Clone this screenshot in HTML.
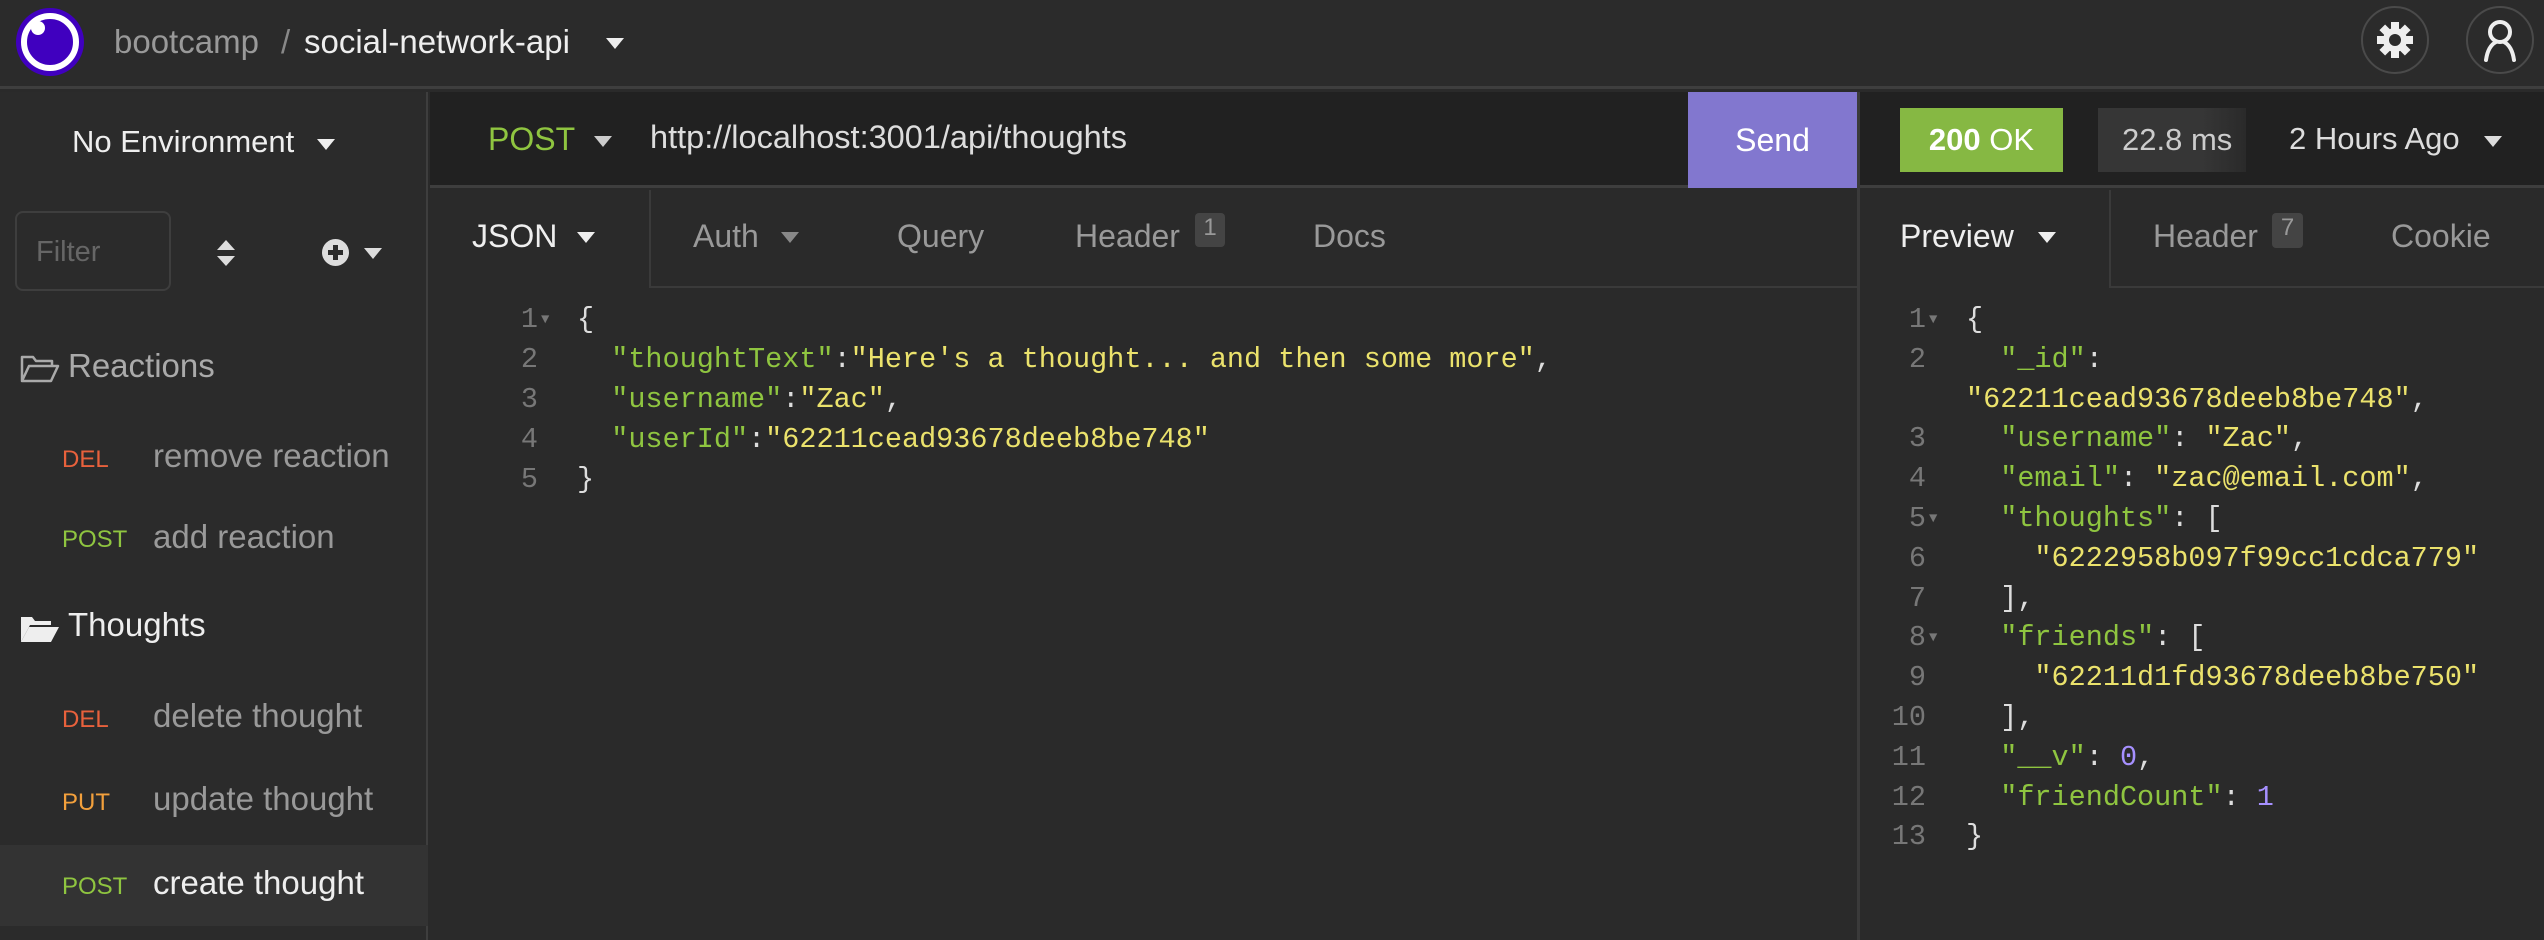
<!DOCTYPE html>
<html><head><meta charset="utf-8"><style>
*{margin:0;padding:0;box-sizing:border-box}
body{width:2544px;height:940px;background:#2a2a2a;font-family:"Liberation Sans",sans-serif;color:#ddd;position:relative;overflow:hidden}
.a{position:absolute;white-space:nowrap}
.tri{position:absolute;width:0;height:0;border-left:9px solid transparent;border-right:9px solid transparent;border-top:11px solid #ddd}
.mono{font-family:"Liberation Mono",monospace;font-size:28.5px}
.mono span,.mono .p{white-space:pre}
.row{display:flex;height:40px}
.ln{color:#777;text-align:right;width:60px}
.fa{width:40px;color:#777;font-size:14px;padding-left:3px}
.k{color:#8fc540}.s{color:#ebe26c}.n{color:#a690ff}.p{color:#ddd}
</style></head><body>
<!-- top bar -->
<div class="a" style="left:0;top:0;width:2544px;height:89px;background:#2b2b2b;border-bottom:3px solid #3e3e3e"></div>
<svg class="a" style="left:14px;top:6px" width="72" height="72"><circle cx="36" cy="36" r="34" fill="#4000bf"/><circle cx="36" cy="36" r="26" fill="none" stroke="#fff" stroke-width="6"/><circle cx="24" cy="22" r="7" fill="#fff"/></svg>
<div class="a" style="left:114px;top:23px;font-size:33px;color:#999">bootcamp</div>
<div class="a" style="left:281px;top:23px;font-size:33px;color:#888">/</div>
<div class="a" style="left:304px;top:23px;font-size:33px;color:#eee">social-network-api</div>
<div class="tri" style="left:606px;top:38px;border-top-color:#eee"></div>
<div class="a" style="left:2361px;top:6px;width:68px;height:68px;border:2px solid #4a4a4a;border-radius:50%"></div>
<svg class="a" style="left:2375px;top:20px" width="40" height="40" viewBox="0 0 40 40"><g fill="#eee"><circle cx="20" cy="20" r="12"/><rect x="16" y="2" width="8" height="36"/><rect x="2" y="16" width="36" height="8"/><rect x="16" y="2" width="8" height="36" transform="rotate(45 20 20)"/><rect x="16" y="2" width="8" height="36" transform="rotate(-45 20 20)"/></g><circle cx="20" cy="20" r="6" fill="#2b2b2b"/></svg>
<div class="a" style="left:2466px;top:6px;width:68px;height:68px;border:2px solid #4a4a4a;border-radius:50%"></div>
<svg class="a" style="left:2480px;top:18px" width="40" height="44" viewBox="0 0 40 44"><circle cx="20" cy="14" r="10" fill="none" stroke="#eee" stroke-width="4"/><path d="M6 42 Q8 28 16 24 M34 42 Q32 28 24 24" fill="none" stroke="#eee" stroke-width="4" stroke-linecap="round"/></svg>

<!-- sidebar -->
<div class="a" style="left:0;top:92px;width:428px;height:848px;background:#2b2b2b;border-right:2px solid #3e3e3e"></div>
<div class="a" style="left:72px;top:124px;font-size:31px;color:#eee">No Environment</div>
<div class="tri" style="left:317px;top:139px;border-top-color:#eee"></div>
<div class="a" style="left:15px;top:211px;width:156px;height:80px;border:2px solid #3e3e3e;border-radius:8px"></div>
<div class="a" style="left:36px;top:236px;font-size:29px;color:#666">Filter</div>
<div class="a" style="left:217px;top:240px;width:0;height:0;border-left:9px solid transparent;border-right:9px solid transparent;border-bottom:10px solid #ddd"></div>
<div class="a" style="left:217px;top:256px;width:0;height:0;border-left:9px solid transparent;border-right:9px solid transparent;border-top:10px solid #ddd"></div>
<div class="a" style="left:322px;top:239px;width:27px;height:27px;border-radius:50%;background:#ddd"></div>
<div class="a" style="left:333px;top:245px;width:5px;height:15px;background:#2b2b2b"></div>
<div class="a" style="left:328px;top:250px;width:15px;height:5px;background:#2b2b2b"></div>
<div class="tri" style="left:364px;top:248px;border-top-color:#ddd"></div>
<svg class="a" style="left:20px;top:354px" width="40" height="30" viewBox="0 0 40 30"><path d="M2 27 V3 H13 L16 7 H32 V12 M2 27 L9 12 H38 L31 27 Z" fill="none" stroke="#aaa" stroke-width="2.5" stroke-linejoin="round"/></svg>
<div class="a" style="left:68px;top:347px;font-size:33px;color:#aaa">Reactions</div>
<div class="a" style="left:62px;top:446px;font-size:24px;color:#e8613c">DEL</div>
<div class="a" style="left:153px;top:437px;font-size:33px;color:#999">remove reaction</div>
<div class="a" style="left:62px;top:526px;font-size:24px;color:#8fc540">POST</div>
<div class="a" style="left:153px;top:518px;font-size:33px;color:#999">add reaction</div>
<svg class="a" style="left:20px;top:614px" width="40" height="30" viewBox="0 0 40 30"><path d="M1 28 V3 H12 L15 7 H31 V11 H10 Z" fill="#eee"/><path d="M1 28 L9 13 H39 L31 28 Z" fill="#eee"/></svg>
<div class="a" style="left:68px;top:606px;font-size:33px;color:#eee">Thoughts</div>
<div class="a" style="left:62px;top:706px;font-size:24px;color:#e8613c">DEL</div>
<div class="a" style="left:153px;top:697px;font-size:33px;color:#999">delete thought</div>
<div class="a" style="left:62px;top:789px;font-size:24px;color:#f3a03c">PUT</div>
<div class="a" style="left:153px;top:780px;font-size:33px;color:#999">update thought</div>
<div class="a" style="left:0;top:845px;width:428px;height:81px;background:#333"></div>
<div class="a" style="left:62px;top:873px;font-size:24px;color:#8fc540">POST</div>
<div class="a" style="left:153px;top:864px;font-size:33px;color:#eee">create thought</div>

<!-- url bar -->
<div class="a" style="left:430px;top:92px;width:2114px;height:96px;background:#212121;border-bottom:3px solid #3e3e3e"></div>
<div class="a" style="left:488px;top:121px;font-size:32px;color:#8fc540">POST</div>
<div class="tri" style="left:594px;top:136px;border-top-color:#ccc"></div>
<div class="a" style="left:650px;top:119px;font-size:32.5px;color:#ddd">http://localhost:3001/api/thoughts</div>
<div class="a" style="left:1688px;top:92px;width:169px;height:96px;background:#8277cf;color:#fff;font-size:32px;text-align:center;line-height:96px">Send</div>
<div class="a" style="left:1857px;top:92px;width:3px;height:848px;background:#3a3a3a"></div>
<div class="a" style="left:1900px;top:108px;width:163px;height:64px;background:#86b843;color:#fff;font-size:31px;text-align:center;line-height:64px"><b>200</b> OK</div>
<div class="a" style="left:2098px;top:108px;width:148px;height:64px;background:linear-gradient(90deg,#363636 70%,#2a2a2a);color:#ccc;font-size:31px;line-height:64px;padding-left:24px;overflow:hidden">22.8 ms</div>
<div class="a" style="left:2289px;top:121px;font-size:31px;color:#ddd">2 Hours Ago</div>
<div class="tri" style="left:2484px;top:136px;border-top-color:#ddd"></div>

<!-- tabs -->
<div class="a" style="left:649px;top:190px;width:1208px;height:98px;border-left:2px solid #3a3a3a;border-bottom:2px solid #3a3a3a"></div>
<div class="a" style="left:472px;top:218px;font-size:32px;color:#eee">JSON</div>
<div class="tri" style="left:577px;top:232px;border-top-color:#eee"></div>
<div class="a" style="left:693px;top:218px;font-size:32px;color:#999">Auth</div>
<div class="tri" style="left:781px;top:232px;border-top-color:#888"></div>
<div class="a" style="left:897px;top:218px;font-size:32px;color:#999">Query</div>
<div class="a" style="left:1075px;top:218px;font-size:32px;color:#999">Header</div>
<div class="a" style="left:1195px;top:213px;width:30px;height:34px;background:#444;border-radius:4px;color:#999;font-size:24px;text-align:center;line-height:30px">1</div>
<div class="a" style="left:1313px;top:218px;font-size:32px;color:#999">Docs</div>

<div class="a" style="left:2109px;top:190px;width:435px;height:98px;border-left:2px solid #3a3a3a;border-bottom:2px solid #3a3a3a"></div>
<div class="a" style="left:1900px;top:218px;font-size:32px;color:#eee">Preview</div>
<div class="tri" style="left:2038px;top:232px;border-top-color:#eee"></div>
<div class="a" style="left:2153px;top:218px;font-size:32px;color:#999">Header</div>
<div class="a" style="left:2272px;top:213px;width:31px;height:35px;background:#444;border-radius:4px;color:#999;font-size:24px;text-align:center;line-height:30px">7</div>
<div class="a" style="left:2391px;top:218px;font-size:32px;color:#999">Cookie</div>

<!-- left code -->
<div class="a mono" style="left:478px;top:300px;line-height:40px">
<div class="row"><div class="ln">1</div><div class="fa" style="width:39px">▼</div><div class="p">{</div></div>
<div class="row"><div class="ln">2</div><div style="width:39px"></div><div><span class="p">  </span><span class="k">"thoughtText"</span><span class="p">:</span><span class="s">"Here's a thought... and then some more"</span><span class="p">,</span></div></div>
<div class="row"><div class="ln">3</div><div style="width:39px"></div><div><span class="p">  </span><span class="k">"username"</span><span class="p">:</span><span class="s">"Zac"</span><span class="p">,</span></div></div>
<div class="row"><div class="ln">4</div><div style="width:39px"></div><div><span class="p">  </span><span class="k">"userId"</span><span class="p">:</span><span class="s">"62211cead93678deeb8be748"</span></div></div>
<div class="row"><div class="ln">5</div><div style="width:39px"></div><div class="p">}</div></div>
</div>

<!-- right code -->
<div class="a mono" style="left:1866px;top:300px;line-height:40px">
<div class="row" style="height:39.8px"><div class="ln">1</div><div class="fa">▼</div><div class="p">{</div></div>
<div class="row" style="height:39.8px"><div class="ln">2</div><div style="width:40px"></div><div><span class="p">  </span><span class="k">"_id"</span><span class="p">:</span></div></div>
<div class="row" style="height:39.8px"><div class="ln"></div><div style="width:40px"></div><div><span class="s">"62211cead93678deeb8be748"</span><span class="p">,</span></div></div>
<div class="row" style="height:39.8px"><div class="ln">3</div><div style="width:40px"></div><div><span class="p">  </span><span class="k">"username"</span><span class="p">: </span><span class="s">"Zac"</span><span class="p">,</span></div></div>
<div class="row" style="height:39.8px"><div class="ln">4</div><div style="width:40px"></div><div><span class="p">  </span><span class="k">"email"</span><span class="p">: </span><span class="s">"zac@email.com"</span><span class="p">,</span></div></div>
<div class="row" style="height:39.8px"><div class="ln">5</div><div class="fa">▼</div><div><span class="p">  </span><span class="k">"thoughts"</span><span class="p">: [</span></div></div>
<div class="row" style="height:39.8px"><div class="ln">6</div><div style="width:40px"></div><div><span class="p">    </span><span class="s">"6222958b097f99cc1cdca779"</span></div></div>
<div class="row" style="height:39.8px"><div class="ln">7</div><div style="width:40px"></div><div class="p">  ],</div></div>
<div class="row" style="height:39.8px"><div class="ln">8</div><div class="fa">▼</div><div><span class="p">  </span><span class="k">"friends"</span><span class="p">: [</span></div></div>
<div class="row" style="height:39.8px"><div class="ln">9</div><div style="width:40px"></div><div><span class="p">    </span><span class="s">"62211d1fd93678deeb8be750"</span></div></div>
<div class="row" style="height:39.8px"><div class="ln">10</div><div style="width:40px"></div><div class="p">  ],</div></div>
<div class="row" style="height:39.8px"><div class="ln">11</div><div style="width:40px"></div><div><span class="p">  </span><span class="k">"__v"</span><span class="p">: </span><span class="n">0</span><span class="p">,</span></div></div>
<div class="row" style="height:39.8px"><div class="ln">12</div><div style="width:40px"></div><div><span class="p">  </span><span class="k">"friendCount"</span><span class="p">: </span><span class="n">1</span></div></div>
<div class="row" style="height:39.8px"><div class="ln">13</div><div style="width:40px"></div><div class="p">}</div></div>
</div>
</body></html>
